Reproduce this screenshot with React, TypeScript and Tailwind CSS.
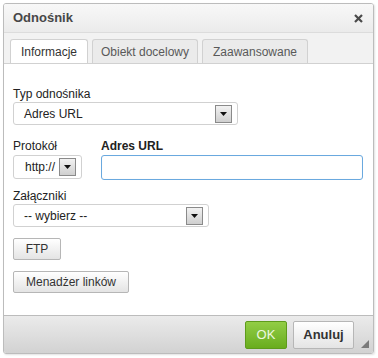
import React from 'react';

const font = { fontFamily: '"Liberation Sans", Arial, sans-serif' };

const Arrow: React.FC = () => (
  <span className="flex h-[18px] w-[17px] items-center justify-center border border-[#8a8a8a] bg-gradient-to-b from-[#f2f2f2] to-[#cfcfcf]">
    <svg width="7" height="4" viewBox="0 0 7 4">
      <path d="M0 0h7L3.5 4z" fill="#111" />
    </svg>
  </span>
);

const Select: React.FC<{ value: string; className: string }> = ({ value, className }) => (
  <div className={`flex items-center justify-between rounded-[3px] border border-[#d1d1d1] bg-white pl-[10px] pr-[5px] text-[12px] text-[#222] ${className}`}>
    <span>{value}</span>
    <Arrow />
  </div>
);

const Btn: React.FC<{ label: string; className: string }> = ({ label, className }) => (
  <button className={`flex items-center justify-center rounded-[2px] border border-[#b6b6b6] bg-gradient-to-b from-[#ffffff] to-[#e4e4e4] text-[12px] text-[#333] ${className}`}>
    {label}
  </button>
);

export default function App() {
  return (
    <div className="h-[358px] w-[378px] bg-white pl-[3px] pt-[3px]" style={font}>
      <div className="flex h-[351px] w-[371px] flex-col overflow-hidden rounded-[3px] border border-[#bcbcbc] shadow-[1px_1px_2px_rgba(0,0,0,0.12)]">
        {/* Title */}
        <div className="flex h-[28px] shrink-0 items-center justify-between bg-gradient-to-b from-[#f8f8f8] to-[#ebebeb] pl-[9px] pr-[10px]">
          <span className="text-[13px] font-bold text-[#474747]">Odnośnik</span>
          <svg width="9" height="9" viewBox="0 0 9 9">
            <path d="M1 1l7 7M8 1L1 8" stroke="#4a4a4a" strokeWidth="2.2" />
          </svg>
        </div>

        {/* Tabs */}
        <div className="flex h-[31px] shrink-0 items-end gap-[4px] border-t border-[#dcdcdc] bg-[#f2f2f2] pl-[6px]">
          <div className="-mb-px flex h-[25px] w-[78px] items-center justify-center rounded-t-[3px] border border-b-0 border-[#d1d1d1] bg-white text-[12px] text-[#333]">
            Informacje
          </div>
          <div className="flex h-[24px] w-[106px] items-center justify-center rounded-t-[3px] border border-b-0 border-[#d1d1d1] bg-[#ebebeb] text-[12px] text-[#595959]">
            Obiekt docelowy
          </div>
          <div className="flex h-[24px] w-[106px] items-center justify-center rounded-t-[3px] border border-b-0 border-[#d1d1d1] bg-[#ebebeb] text-[12px] text-[#595959]">
            Zaawansowane
          </div>
        </div>

        {/* Content */}
        <div className="flex flex-1 flex-col border-t border-[#d1d1d1] bg-white pl-[9px] pt-[23px] text-[12px] leading-[14px] text-[#222]">
          <span>Typ odnośnika</span>
          <Select value="Adres URL" className="mt-[1px] h-[23px] w-[225px]" />

          <div className="mt-[14px] flex gap-[19px]">
            <div className="flex flex-col">
              <span>Protokół</span>
              <Select value="http://" className="mt-[2px] h-[24px] w-[69px] pl-[11px] pr-[5px]" />
            </div>
            <div className="flex flex-col">
              <span className="font-bold">Adres URL</span>
              <div className="mt-[2px] h-[25px] w-[262px] rounded-[3px] border border-[#6aa9df] bg-white shadow-[inset_0_0_1px_rgba(0,0,0,0.1)]" />
            </div>
          </div>

          <span className="mt-[9px]">Załączniki</span>
          <Select value="-- wybierz --" className="mt-[1px] h-[23px] w-[196px]" />

          <Btn label="FTP" className="mt-[11px] h-[22px] w-[48px]" />
          <Btn label="Menadżer linków" className="mt-[11px] h-[22px] w-[116px]" />
        </div>

        {/* Footer */}
        <div className="relative flex h-[38px] shrink-0 items-center justify-end gap-[6px] border-t border-[#bcbcbc] bg-gradient-to-b from-[#ebebeb] to-[#d2d2d2] pr-[19px]">
          <button className="flex h-[28px] w-[42px] items-center justify-center rounded-[2px] border border-[#5e9b1c] bg-gradient-to-b from-[#92cd45] to-[#69ad1c] text-[13px] text-[#eef8e0]">
            OK
          </button>
          <button className="flex h-[28px] w-[61px] items-center justify-center rounded-[2px] border border-[#b6b6b6] bg-gradient-to-b from-[#ffffff] to-[#e4e4e4] text-[13px] font-bold text-[#333]">
            Anuluj
          </button>
          <svg className="absolute bottom-[5px] right-[4px]" width="8" height="8" viewBox="0 0 8 8">
            <path d="M8 0v8H0z" fill="#7a7a7a" />
          </svg>
        </div>
      </div>
    </div>
  );
}
